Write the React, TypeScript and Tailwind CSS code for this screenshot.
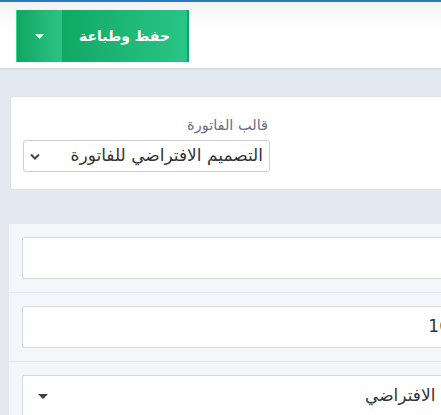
import React from "react";

const font = { fontFamily: '"DejaVu Sans", "Noto Sans", sans-serif' };

const Caret = ({ className }: { className: string }) => (
  <svg width="10" height="5" viewBox="0 0 10 5" className={className}>
    <path d="M0 0h10L5 5z" fill="currentColor" />
  </svg>
);

export default function App() {
  return (
    <div className="w-[441px] h-[415px] overflow-hidden bg-[#e3e9f1]" style={font}>
      <div className="h-[2px] bg-[#2b7bb9]" />
      <header className="h-[68px] bg-linear-to-b from-[#f3f3f3] to-white to-45% border-b-2 border-[#d8dde4] pt-[8px] pl-[16px]">
        <div className="flex h-[52px] w-[173px]">
          <button className="w-[46px] flex items-center justify-center border-l border-[#3dd393] bg-linear-to-r from-[#0fa662] to-[#2bc385] text-white">
            <Caret className="w-[9px]" />
          </button>
          <button className="flex-1 flex items-center justify-center border-r-2 border-[#0ea463] bg-linear-to-r from-[#0fa865] to-[#29c586] text-white text-[14px] font-bold" dir="rtl">
            حفظ وطباعة
          </button>
        </div>
      </header>

      <section className="mt-[26px] ml-[10px] w-[470px] h-[94px] bg-white border border-[#dde3ea] rounded-[3px] pt-[17px] pl-[12px]">
        <div className="w-[247px]" dir="rtl">
          <label className="block text-[14.5px] leading-[22px] text-[#6e6a8e] pr-[2px] mb-[4px]">قالب الفاتورة</label>
          <div className="h-[32px] border border-[#c9ced6] rounded-[3px] flex items-center justify-between pr-[6px] pl-[6px] text-[17px] text-[#333]">
            <span>التصميم الافتراضي للفاتورة</span>
            <svg width="10" height="7" viewBox="0 0 10 7" className="text-[#444]">
              <path d="M1 1.5l4 4 4-4" fill="none" stroke="currentColor" strokeWidth="2" />
            </svg>
          </div>
        </div>
      </section>

      <section className="mt-[34px] ml-[9px] w-[465px] bg-[#f4f7fa]">
        <div className="px-[13px] py-[13px] border-b border-[#e2e8ee]">
          <div className="h-[42px] bg-white border border-[#cfd8dc] rounded-[2px]" />
        </div>
        <div className="px-[13px] py-[13px] border-b border-[#e2e8ee]">
          <div className="h-[42px] bg-white border border-[#cfd8dc] rounded-[2px] flex items-center pr-[10px] text-[17px] text-[#333]" dir="rtl">
            16
          </div>
        </div>
        <div className="px-[13px] py-[13px]">
          <div className="h-[42px] mr-[-50px] bg-white border border-[#cfd8dc] rounded-[2px] flex items-center justify-between pr-[12px] pl-[15px] text-[17px] text-[#333]" dir="rtl">
            <span>الحساب الافتراضي</span>
            <Caret className="text-[#3b3f5c]" />
          </div>
        </div>
      </section>
    </div>
  );
}
